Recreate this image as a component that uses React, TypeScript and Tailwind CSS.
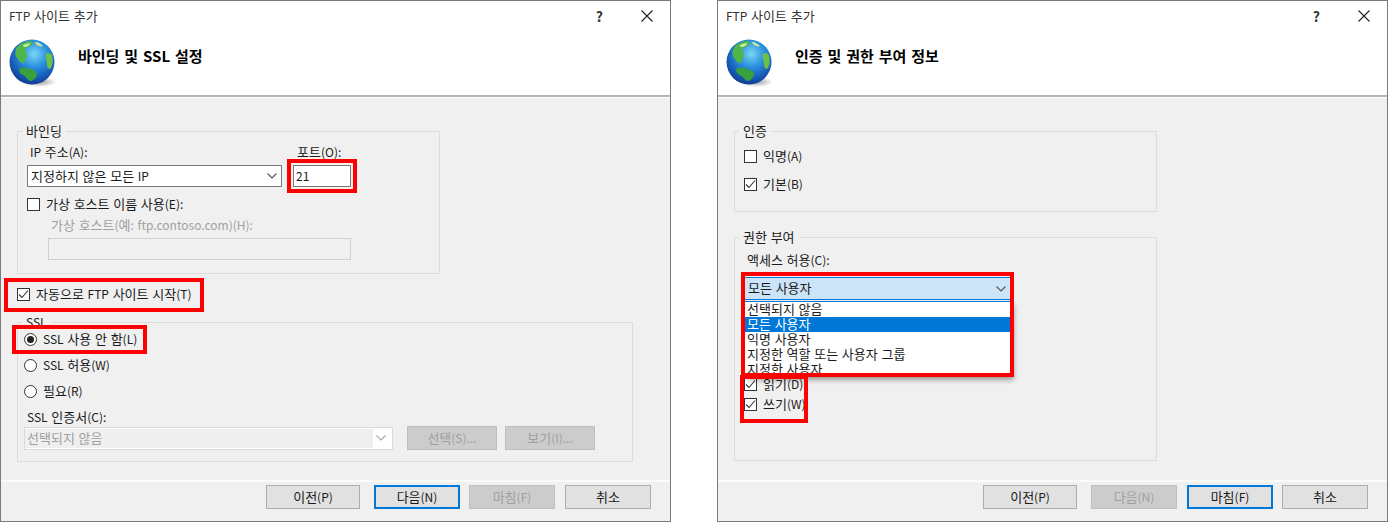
import type { ReactNode } from "react";

const font = "font-['Noto_Sans_CJK_KR','Noto_Sans',sans-serif]";

// hangul sits a size above the latin text in the dialog font
function ko(text: string) {
  return text.split(/([가-힣]+)/).map((part, i) =>
    /[가-힣]/.test(part) ? (
      <span key={i} className="text-[13px]">
        {part}
      </span>
    ) : (
      part
    ),
  );
}

function Globe({ id }: { id: string }) {
  return (
    <svg width="48" height="50" viewBox="0 0 48 50" className="shrink-0">
      <defs>
        <radialGradient id={`${id}-sea`} cx="0.55" cy="0.32" r="0.75">
          <stop offset="0" stopColor="#7ad6f7" />
          <stop offset="0.4" stopColor="#2a8fdc" />
          <stop offset="0.78" stopColor="#1450ac" />
          <stop offset="1" stopColor="#0c2f7c" />
        </radialGradient>
        <radialGradient id={`${id}-shadow`} cx="0.5" cy="0.5" r="0.5">
          <stop offset="0" stopColor="#555" stopOpacity="0.6" />
          <stop offset="1" stopColor="#555" stopOpacity="0" />
        </radialGradient>
      </defs>
      <ellipse cx="30" cy="43" rx="17" ry="5" fill={`url(#${id}-shadow)`} />
      <circle cx="23" cy="23" r="22.5" fill={`url(#${id}-sea)`} />
      <path d="M9 7c3-3 8-5 13-5 2 1 3 3 1 4-3 1-4 3-6 3-1 2-1 4 1 6 1 3-2 5-3 9-3 1-5-2-6-4C5 16 6 11 9 7Z" fill="#4fb64a" />
      <path d="M14 6c2-1 5-2 7-2 0 2-2 3-4 4-1 0-3 0-3-2Z" fill="#cfe8a8" />
      <path d="M26 3c3 0 6 2 8 4-2 1-4 0-6-1-1-1-2-2-2-3Z" fill="#c8e6a0" />
      <path d="M37 15c2-2 4-1 6 1 1 4 1 9-1 13-2 2-4 0-4-3 0-4-2-7-1-11Z" fill="#6cc04a" />
      <path d="M10 30c4-2 8-1 11 0 3 1 6 2 7 5 0 3-3 6-6 7-3 0-4-3-6-5-3-1-6-3-6-7Z" fill="#39a03c" />
    </svg>
  );
}

function CheckBox({ checked = false, label, className = "" }: { checked?: boolean; label: string; className?: string }) {
  return (
    <div className={`flex h-[13px] items-center gap-[6px] ${className}`}>
      <div className="flex h-[13px] w-[13px] shrink-0 items-center justify-center border border-[#333] bg-white">
        {checked && (
          <svg width="11" height="11" viewBox="0 0 11 11" fill="none" stroke="#333" strokeWidth="1.1">
            <path d="M1 5.5 4 8.5 10 1.5" />
          </svg>
        )}
      </div>
      <span className="-mt-[1px] whitespace-nowrap">{ko(label)}</span>
    </div>
  );
}

function Radio({ checked = false, label, className = "" }: { checked?: boolean; label: string; className?: string }) {
  return (
    <div className={`flex h-[13px] items-center gap-[6px] ${className}`}>
      <div className="flex h-[13px] w-[13px] shrink-0 items-center justify-center rounded-full border border-[#333] bg-white">
        {checked && <div className="h-[7px] w-[7px] rounded-full bg-[#222]" />}
      </div>
      <span className="-mt-[1px] whitespace-nowrap">{ko(label)}</span>
    </div>
  );
}

function Chevron({ color = "#555" }: { color?: string }) {
  return (
    <svg width="10" height="6" viewBox="0 0 10 6" fill="none" stroke={color} strokeWidth="1.1" className="shrink-0">
      <path d="M.5.5 5 5 9.5.5" />
    </svg>
  );
}

function Button({ label, kind = "normal", className = "" }: { label: string; kind?: "normal" | "focus" | "off"; className?: string }) {
  const styles = {
    normal: "border border-[#adadad] bg-[#e1e1e1] text-[#1a1a1a]",
    focus: "border-2 border-[#0078d7] bg-[#e1e1e1] text-[#1a1a1a]",
    off: "border border-[#bfbfbf] bg-[#cccccc] text-[#a0a0a0]",
  };
  return <div className={`flex h-[24px] items-center justify-center ${styles[kind]} ${className}`}>{ko(label)}</div>;
}

function Group({ legend, className, children }: { legend: string; className: string; children: ReactNode }) {
  return (
    <fieldset className={`ml-[16px] w-[423px] border border-[#dcdcdc] pl-[9px] ${className}`}>
      <legend className="-ml-[5px] h-[16px] px-[4px] leading-[15px]">{ko(legend)}</legend>
      {children}
    </fieldset>
  );
}

function Mark({ className }: { className: string }) {
  return <div className={`pointer-events-none absolute z-20 border-4 border-[#ff0000] ${className}`} />;
}

function Dialog({ heading, id, footer, children }: { heading: string; id: string; footer: ReactNode; children: ReactNode }) {
  return (
    <section className="flex h-[522px] w-[671px] flex-col border border-[#7a7a7a] bg-[#f0f0f0]">
      <header className="h-[96px] shrink-0 border-b-2 border-[#b4b4b4] bg-white">
        <div className="flex h-[29px] items-center justify-between pl-[8px] pr-[17px] text-[#333]">
          <span className="[word-spacing:1px]">{ko("FTP 사이트 추가")}</span>
          <div className="flex items-center gap-[38px]">
            <span className="text-[14px] font-bold">?</span>
            <svg width="12" height="12" viewBox="0 0 12 12" stroke="#222" strokeWidth="1.1">
              <path d="M.5.5l11 11M11.5.5l-11 11" />
            </svg>
          </div>
        </div>
        <div className="flex items-center gap-[21px] pl-[8px] pt-[9px]">
          <Globe id={id} />
          <h1 className="-mt-[16px] text-[15px] font-semibold text-black [word-spacing:1.5px]">{heading}</h1>
        </div>
      </header>
      <div className="flex-1 border-t border-white">{children}</div>
      <footer className="flex h-[41px] shrink-0 border-t-2 border-[#fbfbfb] pt-[3px]">{footer}</footer>
    </section>
  );
}

export default function App() {
  return (
    <main className={`flex h-[522px] w-[1388px] justify-between overflow-hidden bg-white text-[12px] leading-[14px] text-[#1a1a1a] [word-spacing:1px] ${font}`}>
      <Dialog
        id="bind"
        heading="바인딩 및 SSL 설정"
        footer={
          <>
            <Button label="이전(P)" className="ml-[265px] w-[94px]" />
            <Button label="다음(N)" kind="focus" className="ml-[14px] w-[86px]" />
            <Button label="마침(F)" kind="off" className="ml-[9px] w-[86px]" />
            <Button label="취소" className="ml-[10px] w-[86px]" />
          </>
        }
      >
        <Group legend="바인딩" className="mt-[25px] h-[151px]">
          <div className="flex pt-[6px]">
            <div className="w-[255px]">
              <p className="pl-[3px]">{ko("IP 주소(A):")}</p>
              <div className="mt-[6px] flex h-[22px] items-center justify-between border border-[#7a7a7a] bg-white pl-[3px] pr-[4px]">
                <span className="-mt-[1px]">{ko("지정하지 않은 모든 IP")}</span>
                <Chevron />
              </div>
            </div>
            <div className="ml-[11px] w-[58px]">
              <p className="pl-[4px]">{ko("포트(O):")}</p>
              <div className="relative mt-[6px] flex h-[22px] items-center border border-[#7a7a7a] bg-white pl-[2px]">
                21
                <Mark className="-inset-[7px]" />
              </div>
            </div>
          </div>
          <CheckBox label="가상 호스트 이름 사용(E):" className="mt-[11px]" />
          <p className="mt-[7px] pl-[24px] text-[#a0a0a0]">{ko("가상 호스트(예: ftp.contoso.com)(H):")}</p>
          <div className="ml-[21px] mt-[6px] h-[22px] w-[303px] border border-[#d0d0d0] bg-[#f0f0f0]" />
        </Group>
        <div className="relative ml-[16px] mt-[14px]">
          <CheckBox checked label="자동으로 FTP 사이트 시작(T)" />
          <Mark className="-left-[13px] -top-[10px] -bottom-[11px] w-[200px]" />
        </div>
        <Group legend="SSL" className="mt-[13px] h-[148px] w-[616px]">
          <div className="relative ml-[-3px] mt-[3px]">
            <Radio checked label="SSL 사용 안 함(L)" />
            <Mark className="-left-[12px] -top-[8px] -bottom-[8px] w-[135px]" />
          </div>
          <Radio label="SSL 허용(W)" className="ml-[-3px] mt-[13px]" />
          <Radio label="필요(R)" className="ml-[-3px] mt-[13px]" />
          <p className="mt-[12px]">{ko("SSL 인증서(C):")}</p>
          <div className="ml-[-3px] mt-[2px] flex items-center">
            <div className="flex h-[23px] w-[369px] items-center justify-between border border-[#d9d9d9] bg-white pr-[6px]">
              <div className="flex h-[19px] w-[348px] items-center bg-[#efefef] pl-[2px] text-[#a0a0a0]">
                <span>{ko("선택되지 않음")}</span>
              </div>
              <Chevron color="#aaa" />
            </div>
            <Button label="선택(S)..." kind="off" className="ml-[14px] w-[90px]" />
            <Button label="보기(I)..." kind="off" className="ml-[8px] w-[90px]" />
          </div>
        </Group>
      </Dialog>

      <Dialog
        id="auth"
        heading="인증 및 권한 부여 정보"
        footer={
          <>
            <Button label="이전(P)" className="ml-[265px] w-[94px]" />
            <Button label="다음(N)" kind="off" className="ml-[14px] w-[86px]" />
            <Button label="마침(F)" kind="focus" className="ml-[10px] w-[86px]" />
            <Button label="취소" className="ml-[9px] w-[86px]" />
          </>
        }
      >
        <Group legend="인증" className="mt-[25px] h-[89px]">
          <CheckBox label="익명(A)" className="mt-[11px]" />
          <CheckBox checked label="기본(B)" className="mt-[15px]" />
        </Group>
        <Group legend="권한 부여" className="mt-[17px] h-[232px]">
          <p className="pl-[3px] pt-[8px]">{ko("액세스 허용(C):")}</p>
          <div className="relative mt-[10px] flex h-[23px] w-[267px] items-center justify-between border border-[#0078d7] bg-[#cce4f7] pl-[3px] pr-[4px]">
            <span className="-mt-[1px]">{ko("모든 사용자")}</span>
            <Chevron />
            <Mark className="-left-[4px] -right-[4px] -top-[6px] -bottom-[78px]" />
            <ul className="absolute -left-px -right-px top-[23px] z-10 h-[75px] overflow-hidden border border-[#0078d7] bg-white pl-0 leading-[13px] shadow-[3px_4px_5px_rgba(0,0,0,0.35)]">
              <li className="h-[15px] pl-[2px]">{ko("선택되지 않음")}</li>
              <li className="h-[15px] bg-[#0078d7] pl-[2px] text-white">{ko("모든 사용자")}</li>
              <li className="h-[15px] pl-[2px]">{ko("익명 사용자")}</li>
              <li className="h-[15px] pl-[2px]">{ko("지정한 역할 또는 사용자 그룹")}</li>
              <li className="h-[15px] pl-[2px]">{ko("지정한 사용자")}</li>
            </ul>
          </div>
          <div className="relative mt-[78px] w-[60px]">
            <CheckBox checked label="읽기(D)" />
            <CheckBox checked label="쓰기(W)" className="mt-[7px]" />
            <Mark className="-left-[4px] -right-[4px] -top-[3px] -bottom-[12px]" />
          </div>
        </Group>
      </Dialog>
    </main>
  );
}
